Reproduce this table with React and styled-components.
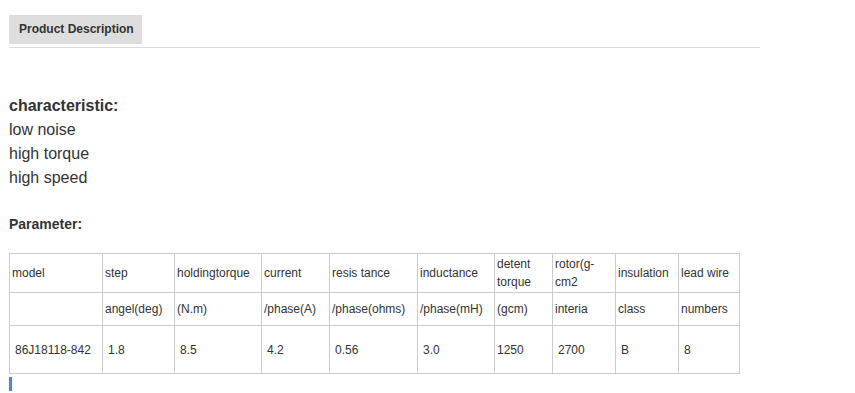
import styled, { createGlobalStyle } from "styled-components";

const Global = createGlobalStyle`
  body {
    margin:0;
    background:#fff;
    font-family:"Liberation Sans", Arial, sans-serif;
    color:#333;
  }
`

const columns = [93, 72, 87, 68, 88, 77, 58, 63, 63, 61]

const head = ["model", "step", "holdingtorque", "current", "resis tance", "inductance", "detent torque", "rotor(g-cm2", "insulation", "lead wire"]
const units = ["", "angel(deg)", "(N.m)", "/phase(A)", "/phase(ohms)", "/phase(mH)", "(gcm)", "interia", "class", "numbers"]
const values = [
  ["86J18118-842", true],
  ["1.8", true],
  ["8.5", true],
  ["4.2", true],
  ["0.56", true],
  ["3.0", true],
  ["1250", false],
  ["2700", true],
  ["B", true],
  ["8", true],
]

function App() {
  return (
    <Page>
      <Global />
      <Tabs>
        <Tab>Product Description</Tab>
      </Tabs>
      <Section>
        <Heading>characteristic:</Heading>
        <Line>low noise</Line>
        <Line>high torque</Line>
        <Line>high speed</Line>
      </Section>
      <SubHeading>Parameter:</SubHeading>
      <Table>
        <colgroup>
          {columns.map((w, i) => <col key={i} style={{ width: w }} />)}
        </colgroup>
        <tbody>
          <Row height={39}>
            {head.map((t, i) => <Cell key={i}>{t}</Cell>)}
          </Row>
          <Row height={33}>
            {units.map((t, i) => <Cell key={i}>{t}</Cell>)}
          </Row>
          <Row height={48}>
            {values.map(([t, indent], i) => <Cell key={i} $indent={indent}>{t}</Cell>)}
          </Row>
        </tbody>
      </Table>
      <Caret />
    </Page>
  )
}

const Page = styled.div`
  padding:15px 0 0 9px;
`
const Tabs = styled.div`
  width:751px;
  height:32px;
  border-bottom:1px solid #ddd;
`
const Tab = styled.div`
  width:133px;
  height:29px;
  background:#dedede;
  font-size:12px;
  font-weight:bold;
  line-height:29px;
  padding-left:10px;
  box-sizing:border-box;
  color:#333;
`
const Section = styled.div`
  margin-top:46px;
  font-size:16px;
  line-height:24px;
`
const Heading = styled.div`
  font-weight:bold;
`
const Line = styled.div``
const SubHeading = styled.div`
  margin-top:24px;
  font-size:14px;
  font-weight:bold;
  line-height:20px;
`
const Table = styled.table`
  margin-top:19px;
  border-collapse:collapse;
  table-layout:fixed;
  width:730px;
  font-size:12px;
  line-height:18px;
`
const Row = styled.tr`
  height:${p => p.height}px;
`
const Cell = styled.td`
  border:1px solid #ccc;
  padding:0 0 0 ${p => (p.$indent ? 5 : 2)}px;
  vertical-align:middle;
  color:#333;
  box-sizing:border-box;
`
const Caret = styled.div`
  margin-top:3px;
  width:3px;
  height:14px;
  background:#4a86d8;
`

export default App
